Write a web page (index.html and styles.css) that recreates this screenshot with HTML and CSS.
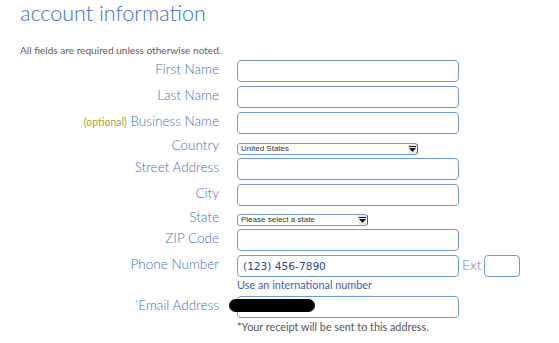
FILE: index.html
```html
<!DOCTYPE html>
<html lang="en">
<head>
  <meta charset="UTF-8">
  <title>Account information</title>
  <link rel="stylesheet" href="styles.css">
</head>
<body>
  <main class="page">
    <h1 class="title">account information</h1>
    <p class="intro">All fields are required unless otherwise noted.</p>

    <div class="form">
      <div class="row">
        <label class="label">First Name</label>
        <div class="field"><input class="text" type="text"></div>
      </div>
      <div class="row">
        <label class="label">Last Name</label>
        <div class="field"><input class="text" type="text"></div>
      </div>
      <div class="row">
        <label class="label"><span class="optional">(optional)</span> Business Name</label>
        <div class="field"><input class="text" type="text"></div>
      </div>
      <div class="row row-select">
        <label class="label">Country</label>
        <div class="field">
          <div class="select select-country">
            <span class="select-value">United States</span>
            <span class="select-arrow">
              <svg width="7" height="6" viewBox="0 0 7 6"><rect x="0" y="0" width="7" height="1" fill="#111"/><path d="M0 2h7L3.5 6z" fill="#111"/></svg>
            </span>
          </div>
        </div>
      </div>
      <div class="row">
        <label class="label">Street Address</label>
        <div class="field"><input class="text" type="text"></div>
      </div>
      <div class="row">
        <label class="label">City</label>
        <div class="field"><input class="text" type="text"></div>
      </div>
      <div class="row row-select row-state">
        <label class="label">State</label>
        <div class="field">
          <div class="select select-state">
            <span class="select-value">Please select a state</span>
            <span class="select-arrow">
              <svg width="7" height="6" viewBox="0 0 7 6"><rect x="0" y="0" width="7" height="1" fill="#111"/><path d="M0 2h7L3.5 6z" fill="#111"/></svg>
            </span>
          </div>
        </div>
      </div>
      <div class="row">
        <label class="label">ZIP Code</label>
        <div class="field"><input class="text" type="text"></div>
      </div>
      <div class="row">
        <label class="label">Phone Number</label>
        <div class="field">
          <div class="phone">
            <input class="text phone-input" type="text" value="(123) 456-7890">
            <span class="ext-label">Ext</span>
            <input class="text ext-input" type="text">
          </div>
          <a class="intl" href="#">Use an international number</a>
        </div>
      </div>
      <div class="row row-email">
        <label class="label"><span class="star">*</span>Email Address</label>
        <div class="field">
          <div class="email-wrap">
            <input class="text" type="text">
            <span class="redact"></span>
          </div>
          <p class="hint">*Your receipt will be sent to this address.</p>
        </div>
      </div>
    </div>
  </main>
</body>
</html>
```

FILE: styles.css
```css
html, body {
  margin: 0;
  padding: 0;
  background: #fff;
  font-family: Lato, "Open Sans", sans-serif;
}

.page {
  padding: 0 20px;
}

.title {
  margin: 0;
  font-size: 21.5px;
  line-height: 27px;
  font-weight: 300;
  color: #3a6ed6;
}

.intro {
  margin: 16px 0 3px;
  font-size: 10.1px;
  line-height: 14px;
  color: #5e5e5e;
}

.form {
  display: flex;
  flex-direction: column;
}

.row {
  display: flex;
  align-items: flex-start;
  gap: 18px;
  margin-bottom: 3.8px;
}

.label {
  width: 199px;
  flex: none;
  text-align: right;
  font-size: 13.5px;
  line-height: 18px;
  font-weight: 300;
  color: #3f70c4;
}

.optional {
  font-size: 10.5px;
  font-weight: 400;
  color: #b3a024;
}

.star {
  font-size: 9px;
  vertical-align: 3px;
}

.field {
  display: flex;
  flex-direction: column;
}

.text {
  box-sizing: border-box;
  width: 222px;
  height: 22px;
  margin: 0;
  padding: 0 5px;
  border: 1px solid #6d9ad6;
  border-radius: 4px;
  background: #fff;
  font-family: "DejaVu Sans", Verdana, sans-serif;
  font-size: 10.6px;
  color: #2c4b8c;
  outline: none;
}

.row-select {
  margin-top: -1.3px;
  margin-bottom: 3px;
}

.row-select .field {
  padding-top: 6.8px;
}

.row-state .field {
  padding-top: 5.5px;
}

.select {
  box-sizing: border-box;
  display: flex;
  align-items: center;
  justify-content: space-between;
  height: 12px;
  border: 1px solid #6d9ad6;
  border-radius: 3px;
  background: #fff;
  font-family: "Liberation Sans", Arial, sans-serif;
  font-size: 8px;
  color: #333;
  padding-left: 3px;
}

.select-country {
  width: 181px;
}

.select-state {
  width: 131px;
}

.select-arrow {
  display: flex;
  align-items: center;
  justify-content: center;
  width: 9px;
  height: 10px;
  background: #ececec;
  border-radius: 0 2px 2px 0;
  box-shadow: 1px 0 0 #3c5f99;
}

.phone {
  display: flex;
  align-items: flex-start;
  gap: 3px;
}

.ext-label {
  font-size: 14px;
  line-height: 18px;
  font-weight: 300;
  color: #6b78c2;
  margin-top: 1px;
}

.ext-input {
  width: 36px;
}

.intl {
  margin-top: 1.5px;
  font-size: 10.85px;
  line-height: 14px;
  color: #3c62b4;
  text-decoration: none;
}

.row-email {
  margin-top: -1.5px;
}

.email-wrap {
  position: relative;
}

.redact {
  position: absolute;
  left: -8px;
  top: 4px;
  width: 86px;
  height: 13px;
  border-radius: 7px;
  background: #000;
}

.hint {
  margin: 2.5px 0 0;
  font-size: 10.8px;
  line-height: 13px;
  color: #555;
}
```
